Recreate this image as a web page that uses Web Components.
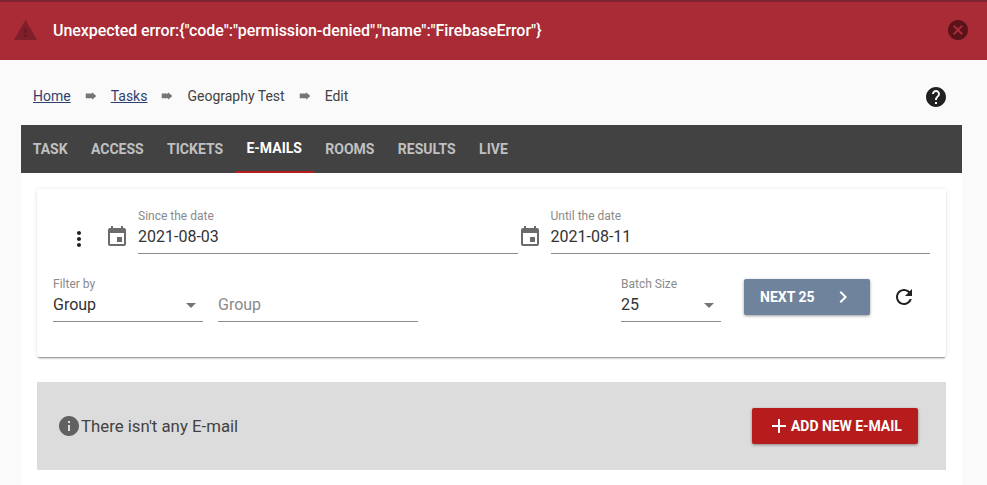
<!DOCTYPE html>
<html>
<head>
<meta charset="utf-8">
<title>E-mails</title>
<style>
html, body { margin: 0; padding: 0; height: 485px; overflow: hidden; background: #fafafa; font-family: Roboto, "Liberation Sans", sans-serif; }
.content { margin: 0 25px 0 21px; }
.row { display: flex; align-items: flex-start; }
.row-dates { padding: 20px 16px 0 30px; }
.row-filters { padding: 23px 16px 0 16px; }
.sheet { background: #fff; padding: 16px; height: 312px; box-sizing: border-box; }
.grow { flex: 1; }
</style>
</head>
<body>
<app-alert>Unexpected error:{"code":"permission-denied","name":"FirebaseError"}</app-alert>
<div class="content">
  <app-breadcrumb></app-breadcrumb>
  <app-tabs></app-tabs>
  <div class="sheet">
    <app-card>
      <div class="row row-dates">
        <app-icon name="more" size="24" color="#212121" style="margin:18px 14px 0 0"></app-icon>
        <app-icon name="event" size="24" color="#6b6b6b" style="margin:16px 9px 0 0"></app-icon>
        <text-field label="Since the date" value="2021-08-03" class="grow"></text-field>
        <app-icon name="event" size="24" color="#6b6b6b" style="margin:16px 9px 0 0"></app-icon>
        <text-field label="Until the date" value="2021-08-11" class="grow"></text-field>
      </div>
      <div class="row row-filters">
        <select-field label="Filter by" value="Group" style="width:150px"></select-field>
        <text-field placeholder="Group" style="width:200px;margin-left:15px"></text-field>
        <div class="grow"></div>
        <select-field label="Batch Size" value="25" style="width:100px"></select-field>
        <app-button kind="next" style="margin:2px 22px 0 23px">NEXT 25</app-button>
        <app-icon name="refresh" size="24" color="#212121" style="margin:8px 14px 0 0"></app-icon>
      </div>
    </app-card>
    <empty-panel>There isn't any E-mail</empty-panel>
  </div>
</div>

<script>
const ICONS = {
  triangle: "M1 21h22L12 2 1 21z",
  mark: "M13 18h-2v-2h2v2zm0-4h-2v-4h2v4z",
  cancel: "M12 2C6.47 2 2 6.47 2 12s4.47 10 10 10 10-4.47 10-10S17.53 2 12 2zm5 13.59L15.59 17 12 13.41 8.41 17 7 15.59 10.59 12 7 8.41 8.41 7 12 10.59 15.59 7 17 8.41 13.41 12 17 15.59z",
  help: "M12 2C6.48 2 2 6.48 2 12s4.48 10 10 10 10-4.48 10-10S17.52 2 12 2zm1 17h-2v-2h2v2zm2.07-7.75l-.9.92C13.45 12.9 13 13.5 13 15h-2v-.5c0-1.1.45-2.1 1.17-2.83l1.24-1.26c.37-.36.59-.86.59-1.41 0-1.1-.9-2-2-2s-2 .9-2 2H8c0-2.21 1.79-4 4-4s4 1.79 4 4c0 .88-.36 1.68-.93 2.25z",
  event: "M17 12h-5v5h5v-5zM16 1v2H8V1H6v2H5c-1.11 0-1.99.9-1.99 2L3 19c0 1.1.89 2 2 2h14c1.1 0 2-.9 2-2V5c0-1.1-.9-2-2-2h-1V1h-2zm3 18H5V8h14v11z",
  more: "M12 8c1.1 0 2-.9 2-2s-.9-2-2-2-2 .9-2 2 .9 2 2 2zm0 2c-1.1 0-2 .9-2 2s.9 2 2 2 2-.9 2-2-.9-2-2-2zm0 6c-1.1 0-2 .9-2 2s.9 2 2 2 2-.9 2-2-.9-2-2-2z",
  refresh: "M17.65 6.35C16.2 4.9 14.21 4 12 4c-4.42 0-7.99 3.58-7.99 8s3.57 8 7.99 8c3.73 0 6.84-2.55 7.73-6h-2.08c-.82 2.33-3.04 4-5.65 4-3.31 0-6-2.69-6-6s2.69-6 6-6c1.66 0 3.14.69 4.22 1.78L13 11h7V4l-2.35 2.35z",
  info: "M12 2C6.48 2 2 6.48 2 12s4.48 10 10 10 10-4.48 10-10S17.52 2 12 2zm1 15h-2v-6h2v6zm0-8h-2V7h2v2z",
  chevron: "M10 6L8.59 7.41 13.17 12l-4.58 4.59L10 18l6-6z",
  add: "M19 13h-6v6h-2v-6H5v-2h6V5h2v6h6v2z",
  step: "M3 7.5h11V5.5l7 6.5-7 6.5v-2.5H3z"
};

class AppIcon extends HTMLElement {
  connectedCallback() {
    const size = this.getAttribute("size") || 24;
    const color = this.getAttribute("color") || "currentColor";
    this.attachShadow({ mode: "open" }).innerHTML = `
      <style>:host { display: inline-flex; flex: none; width: ${size}px; height: ${size}px; } svg { display: block; }</style>
      <svg width="${size}" height="${size}" viewBox="0 0 24 24" fill="${color}"><path d="${ICONS[this.getAttribute("name")]}"/></svg>`;
  }
}

class AppAlert extends HTMLElement {
  connectedCallback() {
    this.attachShadow({ mode: "open" }).innerHTML = `
      <style>
      :host {
        display: flex; align-items: center; height: 60px; box-sizing: border-box;
        background: #a82b36; color: #fff; font-size: 16px; font-weight: 500; letter-spacing: -0.07px;
        border-top: 2px solid #7c2530; padding: 0 17px 2px 13px;
      }
      .msg { flex: 1; margin-left: 15px; }
      svg { display: block; flex: none; }
      </style>
      <svg width="25" height="25" viewBox="0 0 24 24"><path fill="#7e1f29" d="${ICONS.triangle}"/><path fill="#6a1620" d="${ICONS.mark}"/></svg>
      <div class="msg"><slot></slot></div>
      <app-icon name="cancel" size="24" color="#5c1219"></app-icon>`;
  }
}

class AppBreadcrumb extends HTMLElement {
  connectedCallback() {
    this.attachShadow({ mode: "open" }).innerHTML = `
      <style>
      :host { display: flex; align-items: center; height: 65px; padding: 7px 14px 0 12px; box-sizing: border-box; font-size: 14px; color: #424242; }
      a { color: #2f3f6f; text-decoration: underline; }
      app-icon { margin: 0 13px; }
      .grow { flex: 1; }
      </style>
      <a href="#">Home</a><app-icon name="step" size="14" color="#757575"></app-icon>
      <a href="#">Tasks</a><app-icon name="step" size="14" color="#757575"></app-icon>
      <span>Geography Test</span><app-icon name="step" size="14" color="#757575"></app-icon>
      <span>Edit</span>
      <div class="grow"></div>
      <app-icon name="help" size="24" color="#212121" style="margin:1px 0 0"></app-icon>`;
  }
}

class AppTabs extends HTMLElement {
  connectedCallback() {
    const tabs = ["TASK", "ACCESS", "TICKETS", "E-MAILS", "ROOMS", "RESULTS", "LIVE"];
    this.attachShadow({ mode: "open" }).innerHTML = `
      <style>
      :host { display: flex; height: 48px; background: #424242; font-size: 14px; font-weight: 700; color: #c0c0c0; }
      .tab { display: flex; align-items: center; padding: 0 11.7px; box-sizing: border-box; height: 48px; border-bottom: 1px solid transparent; }
      .active { color: #fff; border-bottom: 2px solid #b71c1c; }
      </style>
      ${tabs.map(t => `<div class="tab ${t === "E-MAILS" ? "active" : ""}">${t}</div>`).join("")}`;
  }
}

class AppCard extends HTMLElement {
  connectedCallback() {
    this.attachShadow({ mode: "open" }).innerHTML = `
      <style>
      :host { display: block; height: 168px; box-sizing: border-box; background: #fff; border-radius: 2px; box-shadow: 0 2px 2px -1px rgba(0,0,0,.45), 0 0 4px rgba(0,0,0,.1); }
      </style>
      <slot></slot>`;
  }
}

class TextField extends HTMLElement {
  connectedCallback() {
    const label = this.getAttribute("label") || "";
    const value = this.getAttribute("value") || "";
    const placeholder = this.getAttribute("placeholder") || "";
    this.attachShadow({ mode: "open" }).innerHTML = `
      <style>
      :host { display: block; box-sizing: border-box; }
      .label { height: 15px; font-size: 12px; line-height: 15px; color: #8a8a8a; }
      .input { height: 29px; box-sizing: content-box; font-size: 16px; line-height: 26px; color: #333; border-bottom: 1px solid #8c8c8c; }
      .ph { color: #8a8a8a; }
      </style>
      <div class="label">${label}</div>
      <div class="input">${value || `<span class="ph">${placeholder}</span>`}</div>`;
  }
}

class SelectField extends HTMLElement {
  connectedCallback() {
    this.attachShadow({ mode: "open" }).innerHTML = `
      <style>
      :host { display: block; box-sizing: border-box; }
      .label { height: 15px; font-size: 12px; line-height: 15px; color: #8a8a8a; }
      .input { display: flex; align-items: flex-start; justify-content: space-between; height: 29px; line-height: 26px; font-size: 16px; color: #333; border-bottom: 1px solid #8c8c8c; }
      .arrow { width: 0; height: 0; margin: 11px 7px 0 0; border: 5px solid transparent; border-top-color: #757575; border-bottom-width: 0; }
      </style>
      <div class="label">${this.getAttribute("label")}</div>
      <div class="input"><span>${this.getAttribute("value")}</span><span class="arrow"></span></div>`;
  }
}

class AppButton extends HTMLElement {
  connectedCallback() {
    this.attachShadow({ mode: "open" }).innerHTML = `
      <style>
      :host { display: inline-flex; align-items: center; flex: none; box-sizing: border-box; width: 126px; height: 36px; padding-left: 16px; border-radius: 2px; background: #6f849c; color: #fff; font-size: 14px; font-weight: 700; box-shadow: 0 1px 3px rgba(0,0,0,.4); }
      app-icon { margin-left: 16px; }
      </style>
      <slot></slot><app-icon name="chevron" size="24" color="#fff"></app-icon>`;
  }
}

class EmptyPanel extends HTMLElement {
  connectedCallback() {
    this.attachShadow({ mode: "open" }).innerHTML = `
      <style>
      :host { display: flex; align-items: center; height: 88px; margin-top: 25px; padding: 0 28px 0 20px; box-sizing: border-box; background: #dcdcdc; color: #424242; font-size: 16.8px; }
      .msg { flex: 1; }
      .add { display: flex; align-items: center; box-sizing: border-box; width: 166px; height: 36px; padding-left: 15px; border-radius: 2px; background: #b71c1c; color: #fff; font-size: 14px; font-weight: 700; letter-spacing: -0.05px; box-shadow: 0 1px 3px rgba(0,0,0,.4); }
      </style>
      <app-icon name="info" size="24" color="#616161"></app-icon>
      <div class="msg"><slot></slot></div>
      <div class="add"><app-icon name="add" size="24" color="#fff"></app-icon>ADD NEW E-MAIL</div>`;
  }
}

customElements.define("app-icon", AppIcon);
customElements.define("app-alert", AppAlert);
customElements.define("app-breadcrumb", AppBreadcrumb);
customElements.define("app-tabs", AppTabs);
customElements.define("app-card", AppCard);
customElements.define("text-field", TextField);
customElements.define("select-field", SelectField);
customElements.define("app-button", AppButton);
customElements.define("empty-panel", EmptyPanel);
</script>
</body>
</html>
